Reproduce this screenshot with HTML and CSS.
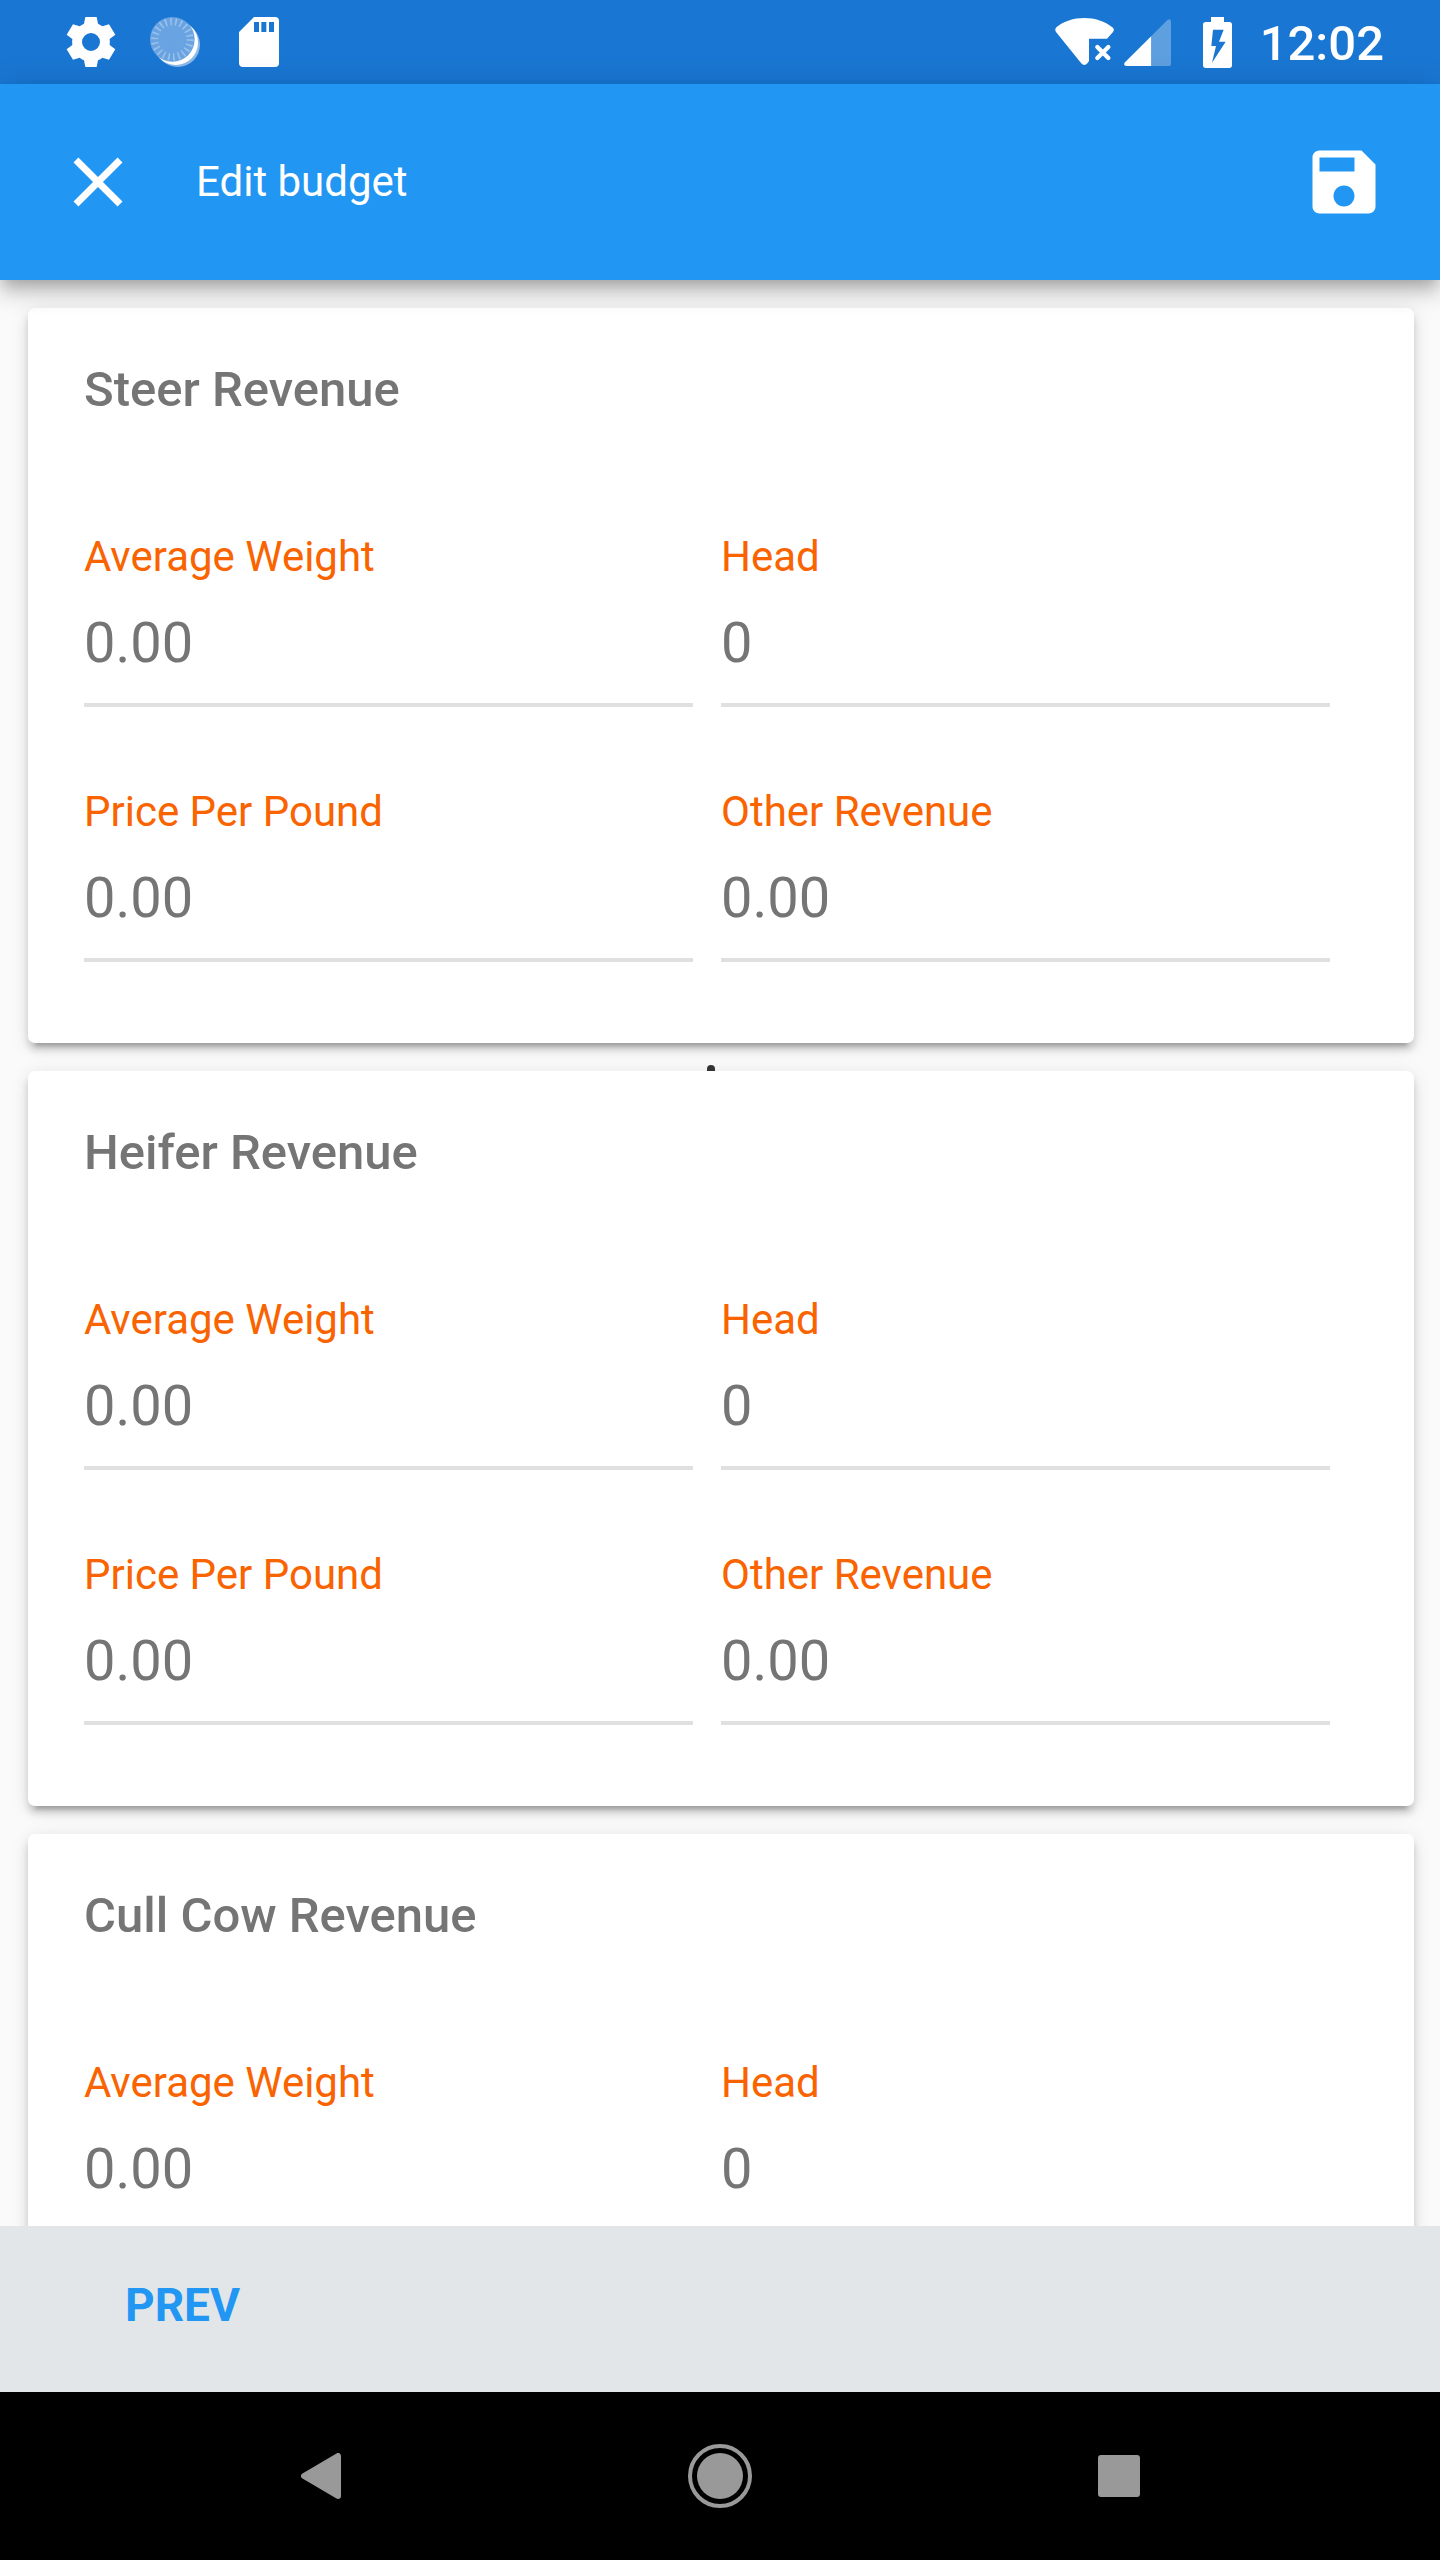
FILE: index.html
```
<!DOCTYPE html>
<html lang="en">
<head>
    <meta charset="UTF-8">
    <meta name="viewport" content="width=device-width, initial-scale=1.0">
    <title>Edit budget</title>
    <link rel="stylesheet" href="styles.css">
</head>
<body>
    <div class="status-bar">
        <div class="status-left">
            <svg width="50" height="50" viewBox="0 0 150 150">
                <path fill="#fff" fill-rule="evenodd" d="M58 0H92L96 20Q103 23 109 28L129 22 148 53 131 66Q132 75 131 84L148 97 129 128 109 122Q103 127 96 130L92 150H58L54 130Q47 127 41 122L21 128 2 97 19 84Q18 75 19 66L2 53 21 22 41 28Q47 23 54 20zM75 48a27 27 0 1 0 0 54 27 27 0 0 0 0-54z"/>
            </svg>
            <svg class="spinner" width="50" height="50" viewBox="0 0 150 150">
                <circle cx="83" cy="83" r="67" fill="#8cb9e9"/>
                <circle cx="77" cy="77" r="67" fill="#fff"/>
                <circle cx="67" cy="67" r="67" fill="#69a3e1"/>
                <circle cx="67" cy="67" r="53" fill="none" stroke="#98c0eb" stroke-width="22" stroke-dasharray="5 10.1"/>
            </svg>
            <svg width="40" height="50" viewBox="0 0 120 150">
                <path fill="#fff" fill-rule="evenodd" d="M45 0H108a12 12 0 0 1 12 12V138a12 12 0 0 1-12 12H12a12 12 0 0 1-12-12V45zM45 15V45H60V15zM67 15V45H82V15zM90 15V45H105V15z"/>
            </svg>
        </div>
        <div class="status-right">
            <svg class="wifi" width="59" height="48" viewBox="0 0 177 144">
                <path fill="#fff" d="M88 0C56 0 25 10 4 28Q-2 34 3 42L78 135Q88 147 98 135L102 129V62H156L174 42Q180 34 172 28C150 10 120 0 88 0z"/>
                <path stroke="#fff" stroke-width="13" stroke-linecap="round" d="M127 87L160 120M160 87L127 120"/>
            </svg>
            <svg class="signal" width="47" height="47" viewBox="0 0 142 142">
                <path fill="#fff" fill-opacity=".3" d="M82 52L132 2Q142-2 142 8V136Q142 142 136 142H82z"/>
                <path fill="#fff" d="M82 52V142H6Q-3 140 3 131z"/>
            </svg>
            <svg class="battery" width="29" height="51" viewBox="0 0 87 153">
                <path fill="#fff" fill-rule="evenodd" d="M24 0H63V15H79a8 8 0 0 1 8 8V145a8 8 0 0 1-8 8H8a8 8 0 0 1-8-8V23a8 8 0 0 1 8-8H24zM30 38L25 87H39L27 137 68 74H48L62 38z"/>
            </svg>
            <span class="clock">12:02</span>
        </div>
    </div>

    <header class="app-bar">
        <button type="button" class="icon-button" aria-label="Close">
            <svg width="84" height="84" viewBox="0 0 24 24"><path fill="#fff" d="M19 6.41L17.59 5 12 10.59 6.41 5 5 6.41 10.59 12 5 17.59 6.41 19 12 13.41 17.59 19 19 17.59 13.41 12z"/></svg>
        </button>
        <h1>Edit budget</h1>
        <button type="button" class="icon-button" aria-label="Save">
            <svg width="84" height="84" viewBox="0 0 24 24"><path fill="#fff" fill-rule="evenodd" d="M17 3H5c-1.11 0-2 .9-2 2v14c0 1.1.89 2 2 2h14c1.1 0 2-.9 2-2V7l-4-4zm-5 16c-1.66 0-3-1.34-3-3s1.34-3 3-3 3 1.34 3 3-1.34 3-3 3zm3-10H5V5h10v4z"/></svg>
        </button>
    </header>

    <main class="content">
        <section class="card">
            <h2>Steer Revenue</h2>
            <div class="fields">
                <div class="field">
                    <label for="steerWeight">Average Weight</label>
                    <input type="text" inputmode="decimal" id="steerWeight" value="0.00">
                </div>
                <div class="field">
                    <label for="steerHead">Head</label>
                    <input type="text" inputmode="numeric" id="steerHead" value="0">
                </div>
                <div class="field">
                    <label for="steerPrice">Price Per Pound</label>
                    <input type="text" inputmode="decimal" id="steerPrice" value="0.00">
                </div>
                <div class="field">
                    <label for="steerOther">Other Revenue</label>
                    <input type="text" inputmode="decimal" id="steerOther" value="0.00">
                </div>
            </div>
        </section>

        <section class="card marked">
            <h2>Heifer Revenue</h2>
            <div class="fields">
                <div class="field">
                    <label for="heiferWeight">Average Weight</label>
                    <input type="text" inputmode="decimal" id="heiferWeight" value="0.00">
                </div>
                <div class="field">
                    <label for="heiferHead">Head</label>
                    <input type="text" inputmode="numeric" id="heiferHead" value="0">
                </div>
                <div class="field">
                    <label for="heiferPrice">Price Per Pound</label>
                    <input type="text" inputmode="decimal" id="heiferPrice" value="0.00">
                </div>
                <div class="field">
                    <label for="heiferOther">Other Revenue</label>
                    <input type="text" inputmode="decimal" id="heiferOther" value="0.00">
                </div>
            </div>
        </section>

        <section class="card">
            <h2>Cull Cow Revenue</h2>
            <div class="fields">
                <div class="field">
                    <label for="cowWeight">Average Weight</label>
                    <input type="text" inputmode="decimal" id="cowWeight" value="0.00">
                </div>
                <div class="field">
                    <label for="cowHead">Head</label>
                    <input type="text" inputmode="numeric" id="cowHead" value="0">
                </div>
            </div>
        </section>
    </main>

    <footer class="pager">
        <button type="button" class="prev-button">PREV</button>
    </footer>

    <nav class="nav-bar">
        <button type="button" aria-label="Back">
            <svg width="40" height="46" viewBox="0 0 40 46"><path fill="#999" stroke="#999" stroke-width="6" stroke-linejoin="round" d="M37 3V43L3 23z"/></svg>
        </button>
        <button type="button" aria-label="Home">
            <svg width="64" height="64" viewBox="0 0 64 64"><circle cx="32" cy="32" r="30" fill="none" stroke="#999" stroke-width="4"/><circle cx="32" cy="32" r="23" fill="#999"/></svg>
        </button>
        <button type="button" aria-label="Recent apps">
            <svg width="42" height="42" viewBox="0 0 42 42"><rect width="42" height="42" rx="3" fill="#999"/></svg>
        </button>
    </nav>
</body>
</html>
```
FILE: styles.css
```
* {
    box-sizing: border-box;
}
body {
    margin: 0;
    height: 100vh;
    display: flex;
    flex-direction: column;
    overflow: hidden;
    background-color: #fafafa;
    font-family: Roboto, "Liberation Sans", sans-serif;
}
svg {
    display: block;
}
h1, h2 {
    margin: 0;
}
button {
    padding: 0;
    border: none;
    background: none;
    font-family: inherit;
    cursor: pointer;
}

/* system status bar */
.status-bar {
    flex: none;
    height: 84px;
    padding: 0 56px 0 66px;
    display: flex;
    align-items: center;
    justify-content: space-between;
    background-color: #1976d2;
    color: white;
}
.status-left, .status-right {
    display: flex;
    align-items: center;
}
.spinner {
    margin: 0 39px 0 34px;
}
.wifi {
    margin-right: 10px;
}
.signal {
    margin-right: 32px;
}
.battery {
    margin-right: 28px;
}
.clock {
    padding-top: 4px;
    font-size: 49px;
    line-height: 56px;
    font-weight: 500;
}

/* app bar */
.app-bar {
    position: relative;
    z-index: 1;
    flex: none;
    height: 196px;
    padding: 0 54px 0 56px;
    display: flex;
    align-items: center;
    background-color: #2196f3;
    color: white;
    box-shadow: 0 7px 14px -4px rgba(0, 0, 0, 0.2), 0 14px 18px rgba(0, 0, 0, 0.14), 0 4px 35px rgba(0, 0, 0, 0.12);
}
.app-bar h1 {
    flex: 1;
    margin-left: 56px;
    font-size: 42px;
    line-height: 50px;
    font-weight: 400;
}

/* cards */
.content {
    flex: 1;
    min-height: 0;
    padding: 28px 26px 0 28px;
    overflow: hidden;
}
.card {
    position: relative;
    margin-bottom: 28px;
    padding: 54px 84px 81px 56px;
    border-radius: 7px;
    background-color: white;
    box-shadow: 0 10px 4px -7px rgba(0, 0, 0, 0.2), 0 7px 7px rgba(0, 0, 0, 0.14), 0 4px 18px rgba(0, 0, 0, 0.12);
}
.card h2 {
    margin-bottom: 114px;
    color: #757575;
    font-size: 49px;
    line-height: 56px;
    font-weight: 500;
}
.marked::before {
    content: "";
    position: absolute;
    top: -6px;
    left: 49%;
    width: 8px;
    height: 6px;
    border-radius: 4px 4px 0 0;
    background-color: #333;
}
.fields {
    display: grid;
    grid-template-columns: 1fr 1fr;
    gap: 80px 28px;
}
.field {
    display: flex;
    flex-direction: column;
    gap: 25px;
}
.field label {
    color: #f96300;
    font-size: 42px;
    line-height: 50px;
}
.field input {
    width: 100%;
    height: 100px;
    padding: 0 0 24px;
    border: none;
    border-bottom: 4px solid #e0e0e0;
    background: none;
    color: #757575;
    font-family: inherit;
    font-size: 56px;
}
.field input:focus {
    outline: none;
    border-bottom-color: #f96300;
}

/* bottom bars */
.pager {
    flex: none;
    height: 166px;
    padding-left: 56px;
    background-color: #e2e6e9;
}
.prev-button {
    height: 158px;
    padding: 0 69px;
    color: #2196f3;
    font-size: 46px;
    font-weight: 700;
}
.nav-bar {
    flex: none;
    height: 168px;
    padding: 0 122px;
    display: flex;
    background-color: black;
}
.nav-bar button {
    flex: 1;
    display: flex;
    align-items: center;
    justify-content: center;
}
```
